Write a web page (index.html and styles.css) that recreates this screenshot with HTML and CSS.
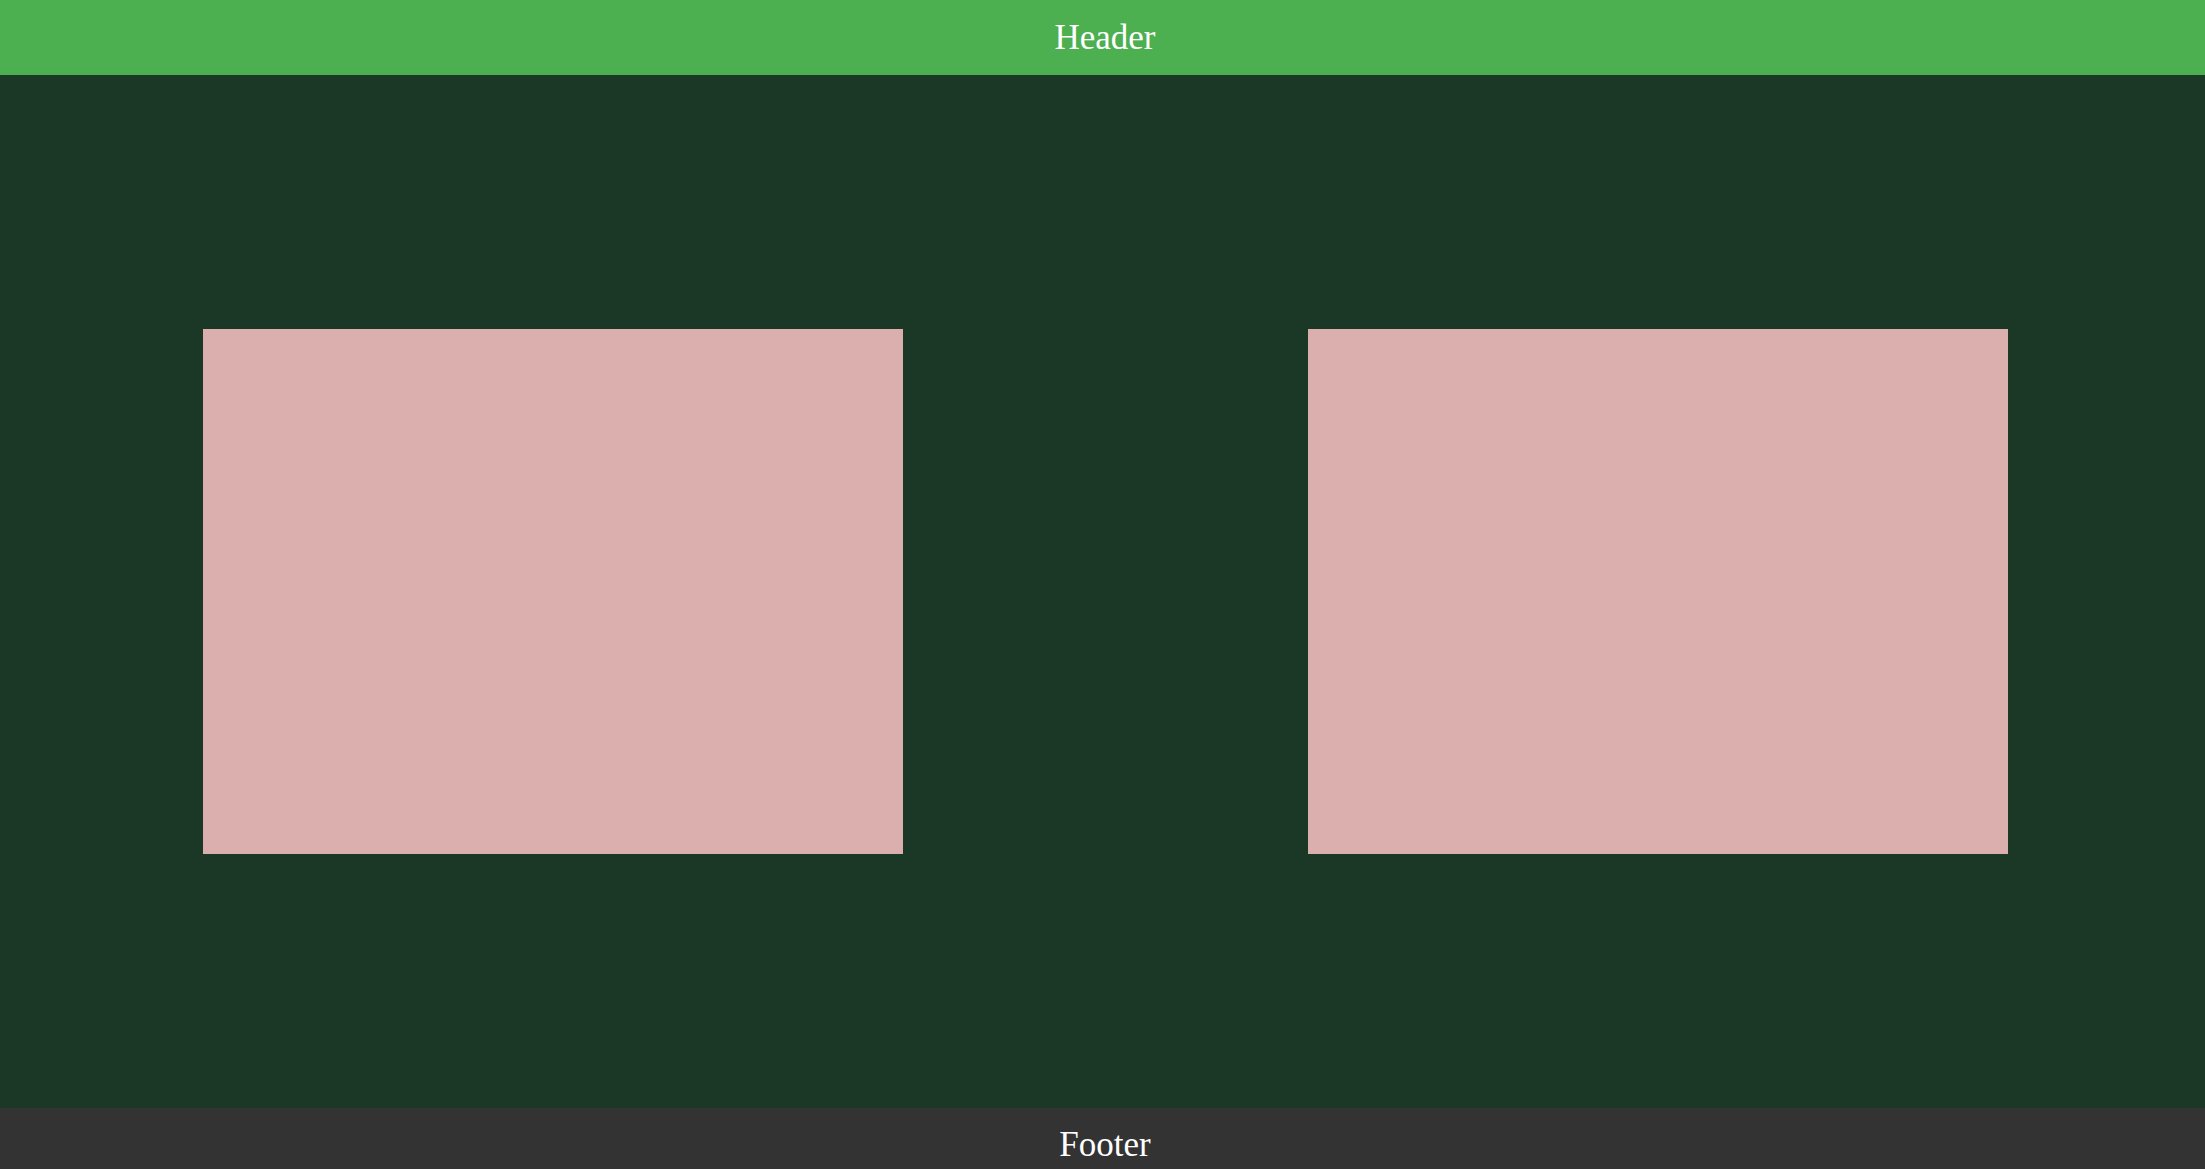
FILE: index.html
```html
<!DOCTYPE html>
<html>
<head>
<meta charset="utf-8">
<link rel="stylesheet" href="styles.css">
</head>
<body>
<header class="header">Header</header>
<main class="main">
  <div class="box"></div>
  <div class="box"></div>
</main>
<footer class="footer">Footer</footer>
</body>
</html>
```
FILE: styles.css
```css
html, body {
  margin: 0;
  padding: 0;
}
body {
  font-family: "Liberation Serif", "Times New Roman", serif;
  background: #1b3827;
}
.header {
  background: #4caf50;
  color: #fff;
  text-align: center;
  font-size: 35px;
  line-height: 40px;
  padding: 18px 0 17px 5px;
}
.main {
  background: #1b3827;
  height: 1033px;
  display: flex;
  align-items: center;
  justify-content: space-between;
  padding: 0 197px 0 203px;
}
.box {
  width: 700px;
  height: 525px;
  background: #dcafaf;
}
.footer {
  background: #333333;
  color: #fff;
  text-align: center;
  font-size: 35px;
  line-height: 40px;
  padding: 17px 0 17px 5px;
}
```
